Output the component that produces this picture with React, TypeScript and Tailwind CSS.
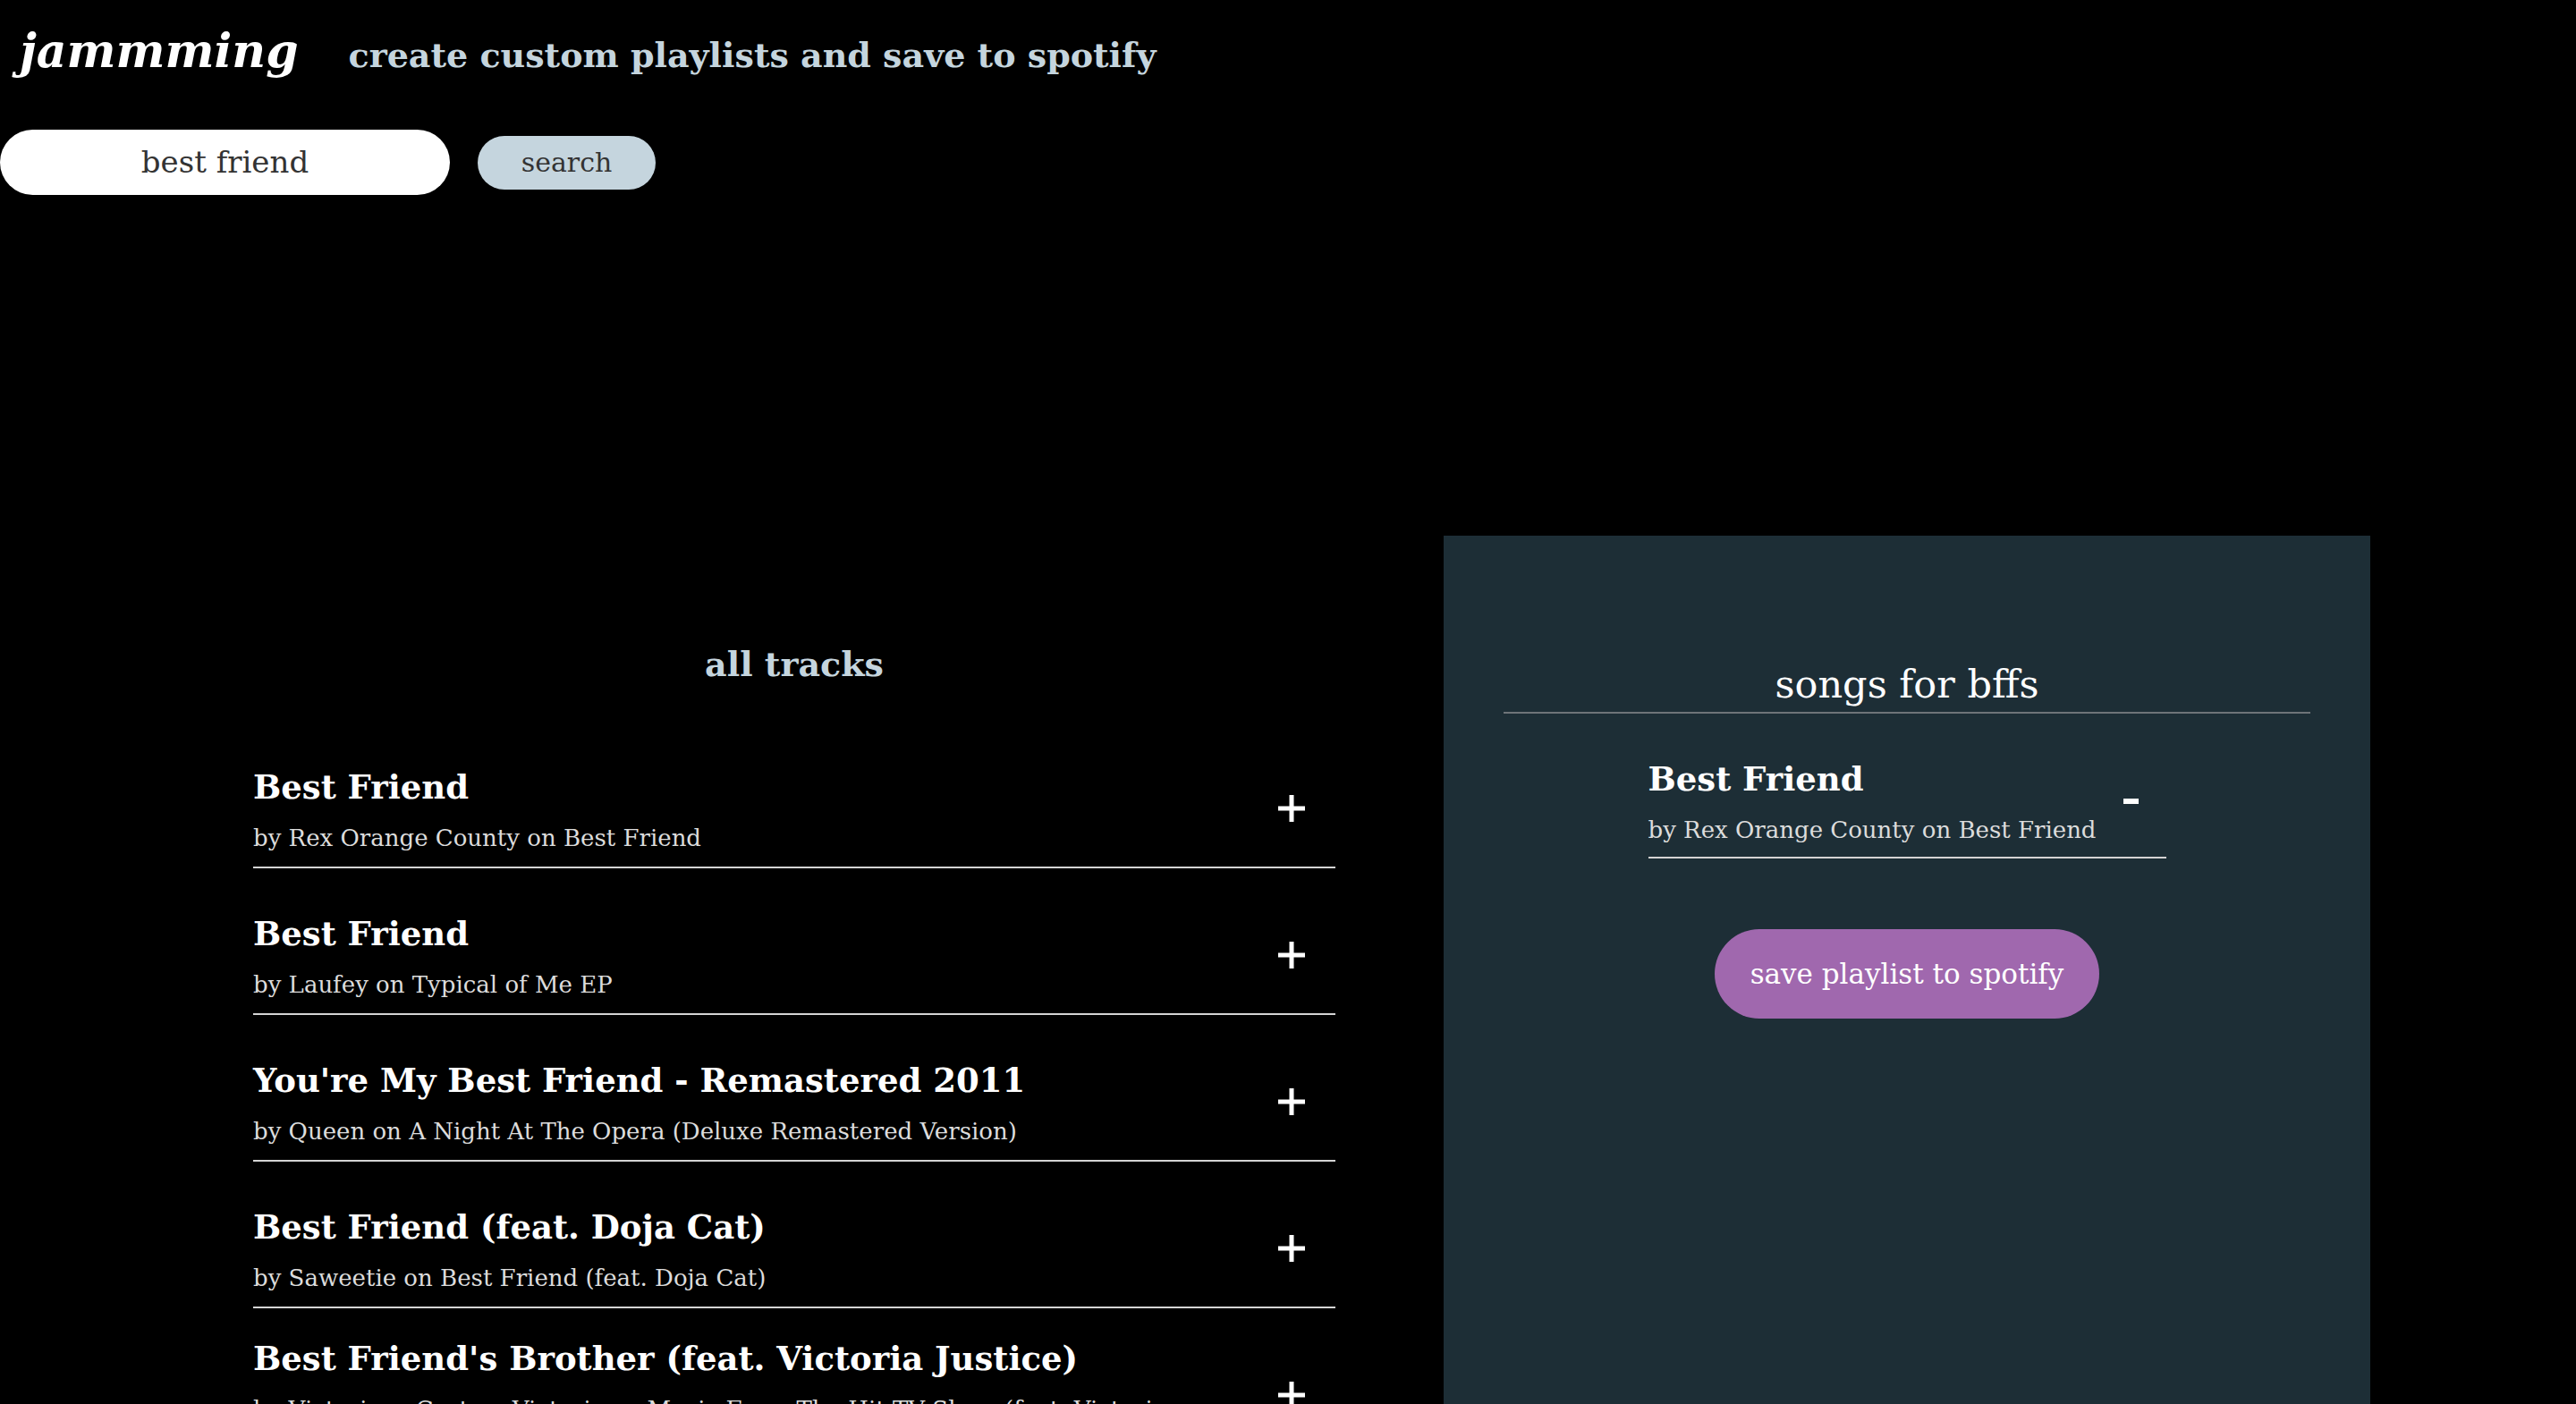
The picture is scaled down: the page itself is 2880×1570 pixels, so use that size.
import React from "react";

type Track = { name: string; artist: string; album: string };

const tracks: Track[] = [
  { name: "Best Friend", artist: "Rex Orange County", album: "Best Friend" },
  { name: "Best Friend", artist: "Laufey", album: "Typical of Me EP" },
  { name: "You're My Best Friend - Remastered 2011", artist: "Queen", album: "A Night At The Opera (Deluxe Remastered Version)" },
  { name: "Best Friend (feat. Doja Cat)", artist: "Saweetie", album: "Best Friend (feat. Doja Cat)" },
  { name: "Best Friend's Brother (feat. Victoria Justice)", artist: "Victorious Cast", album: "Victorious: Music From The Hit TV Show (feat. Victoria Justice)" },
];

function Plus() {
  return (
    <svg width="30" height="30" viewBox="0 0 30 30" aria-hidden>
      <rect x="12.5" y="0" width="5" height="30" fill="#ffffff" />
      <rect x="0" y="12.5" width="30" height="5" fill="#ffffff" />
    </svg>
  );
}

function Minus() {
  return (
    <svg width="17" height="6" viewBox="0 0 17 6" aria-hidden>
      <rect x="0" y="0" width="17" height="6" fill="#ffffff" />
    </svg>
  );
}

function TrackRow({ t, action }: { t: Track; action: "add" | "remove" }) {
  const add = action === "add";
  return (
    <div className="flex h-[122px] items-center justify-between border-b-2 border-[#d4d4d4]">
      <div className={add ? "flex min-w-0 flex-1 flex-col pb-[7px] pr-[120px]" : "flex min-w-0 flex-1 flex-col pb-[3px] pr-[16px]"}>
        <h3 className="text-[37px] font-bold leading-[46px] text-white">{t.name}</h3>
        <p className="mt-[17px] text-[26px] leading-[34px] text-[#dcdcdc]">
          by {t.artist} on {t.album}
        </p>
      </div>
      <button className={add ? "mb-[11px] mr-[34px] flex items-center" : "mb-[4px] mr-[31px] flex items-center"}>
        {add ? <Plus /> : <Minus />}
      </button>
    </div>
  );
}

export default function App() {
  return (
    <div className="min-h-screen overflow-hidden bg-black font-['DejaVu_Serif',serif]">
      <header className="flex items-baseline pl-[22px] pt-[27px]">
        <h1 className="text-[52px] font-bold italic leading-[60px] text-white">jammming</h1>
        <h2 className="ml-[56px] text-[38px] font-bold leading-[60px] text-[#c5d5de]">
          create custom playlists and save to spotify
        </h2>
      </header>

      <div className="mt-[53px] flex items-center">
        <div className="flex h-[73px] w-[503px] items-center justify-center rounded-full bg-white text-[34px] text-[#333333]">
          best friend
        </div>
        <button className="ml-[31px] flex h-[60px] w-[199px] items-center justify-center rounded-full bg-[#c5d5de] text-[30px] text-[#333333]">
          search
        </button>
      </div>

      <main className="mt-[381px] flex items-start">
        <section className="ml-[283px] w-[1210px] pt-[120px]">
          <h2 className="h-[48px] text-center text-[38px] font-bold leading-[48px] text-[#c5d5de]">all tracks</h2>
          <div className="mt-[82px] flex flex-col gap-[42px]">
            {tracks.map((t, i) => (
              <TrackRow key={i} t={t} action="add" />
            ))}
          </div>
        </section>

        <aside className="ml-[121px] flex h-[1000px] w-[1036px] flex-col items-center bg-[#1d2e36] pt-[138px]">
          <h2 className="w-[902px] border-b-2 border-[#6e7478] pb-[3px] text-center text-[43px] leading-[56px] text-white">
            songs for bffs
          </h2>
          <div className="mt-[40px] w-[579px]">
            <TrackRow t={tracks[0]} action="remove" />
          </div>
          <button className="mt-[79px] flex h-[100px] w-[430px] items-center justify-center rounded-full bg-[#a068ae] text-[31px] text-white">
            save playlist to spotify
          </button>
        </aside>
      </main>
    </div>
  );
}
